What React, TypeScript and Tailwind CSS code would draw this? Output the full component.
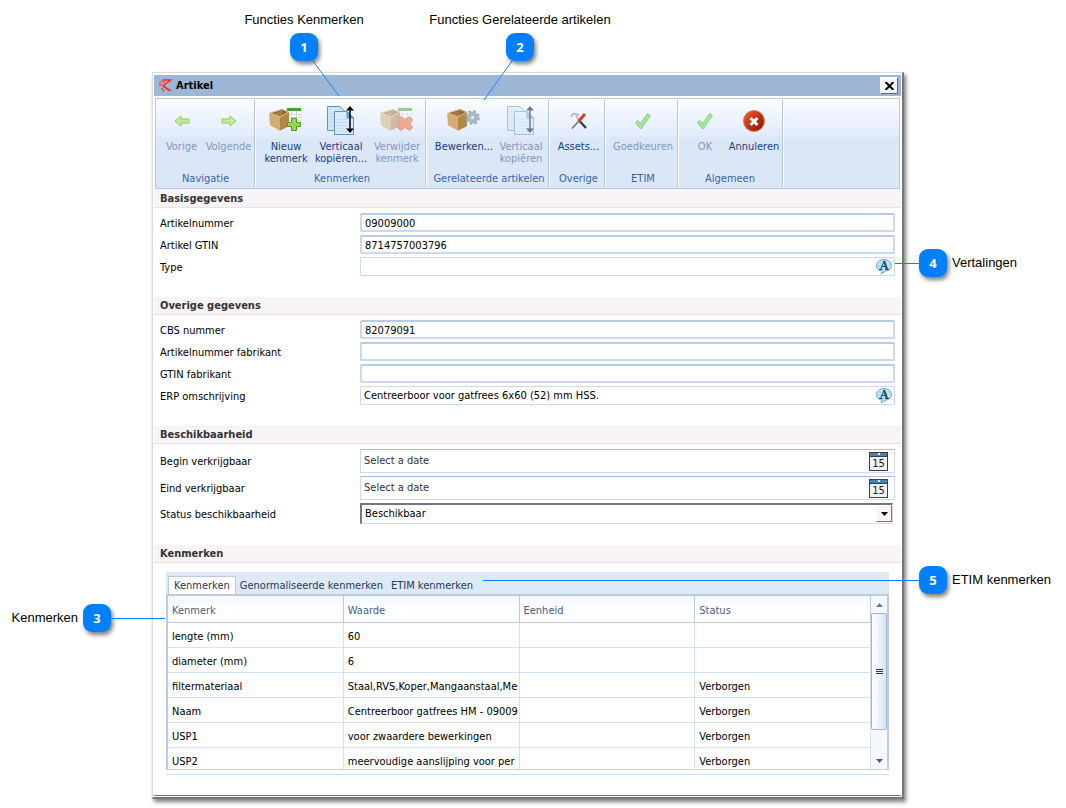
import { useState, type ReactNode } from 'react';
import clsx from 'clsx';

function ArrowIcon({ flip }: { flip?: boolean }) {
  return (
    <svg width="16" height="12" viewBox="0 0 16 12" className={clsx(flip && 'rotate-180')}>
      <path d="M1 6 L7 1 V4 H15 V8 H7 V11 Z" fill="#c9eb97" stroke="#92c95f" />
    </svg>
  );
}

function BoxShape() {
  return (
    <>
      <path d="M0.500 8 L13 4 L20 7 V21 L11 25.500 L1 20 Z" fill="#c39a61" />
      <path d="M1 8 L13 4 L20 7 L11 12 Z" fill="#8f6734" />
      <path d="M5 9 L13 5.500 V10.500 L11 12 Z" fill="#a97c44" />
      <path d="M0.500 8 L11 12 V25.500 L1 20 Z" fill="#d3ac74" />
      <path d="M11 12 L20 7 V21 L11 25.500 Z" fill="#b38747" />
      <path d="M1 8 L13 4.500 L19.500 7 L11 12 Z" fill="none" stroke="#e0c08c" />
    </>
  );
}

function SheetShape() {
  return (
    <>
      <rect x="18" y="3" width="14" height="17" fill="#fff" stroke="#c5d3c5" strokeWidth="0.500" />
      <rect x="18" y="3" width="14" height="3" fill="#4b9b3f" />
      <path d="M18 9.500 H32 M18 12.500 H32 M18 15.500 H32 M22.500 6 V20 M27.500 6 V20" stroke="#cddccd" />
    </>
  );
}

function BoxAddIcon() {
  return (
    <svg width="34" height="32" viewBox="0 0 34 32">
      <SheetShape />
      <BoxShape />
      <path
        d="M22.500 13.500 H27.500 V17.500 H31.500 V21.500 H27.500 V25.500 H22.500 V21.500 H18.500 V17.500 H22.500 Z"
        fill="#9bd455"
        stroke="#4e9a2c"
      />
    </svg>
  );
}

function BoxRemoveIcon() {
  return (
    <svg width="34" height="32" viewBox="0 0 34 32" className="opacity-50">
      <SheetShape />
      <BoxShape />
      <path
        d="M20.500 11.500 L25 14.500 L29.500 11.500 L32.500 14.500 L30 18.500 L32.500 22.500 L29.500 25.500 L25 22.500 L20.500 25.500 L17.500 22.500 L20 18.500 L17.500 14.500 Z"
        fill="#f3622c"
        stroke="#d8431a"
      />
    </svg>
  );
}

function BoxGearIcon() {
  return (
    <svg width="34" height="32" viewBox="0 0 34 32">
      <BoxShape />
      <circle cx="25.500" cy="12.500" r="6" fill="none" stroke="#9babb9" strokeWidth="2.500" strokeDasharray="2.700 2.010" />
      <circle cx="25.500" cy="12.500" r="4" fill="#fff" stroke="#a9b7c3" strokeWidth="3.500" />
      <circle cx="25.500" cy="12.500" r="2" fill="#e8eef6" stroke="#8a9aa8" strokeWidth="0.700" />
    </svg>
  );
}

function CopyIcon({ faded }: { faded?: boolean }) {
  return (
    <svg width="30" height="32" viewBox="0 0 30 32" className={clsx(faded && 'opacity-50')}>
      <path d="M1.500 1.500 H14 L20.500 8 V25.500 H1.500 Z" fill="#cfe4f8" stroke="#5b93c9" />
      <path d="M4 8.500 H16 M4 11.500 H16 M4 14.500 H16 M4 17.500 H16 M4 20.500 H16" stroke="#b9d5f0" />
      <path d="M8.500 6.500 H21 L27.500 13 V29.500 H8.500 Z" fill="#d9ebfb" stroke="#5b93c9" />
      <path d="M21 6.500 L27.500 13 H21 Z" fill="#74ace0" stroke="#5b93c9" />
      <path d="M11 14.500 H21 M11 17.500 H22 M11 20.500 H22 M11 23.500 H22 M11 26.500 H22" stroke="#c0dbf4" />
      <path d="M24 4 V25" stroke="#000" strokeWidth="1.500" />
      <path d="M24 1 L28 5.500 H20 Z M24 28 L28 23.500 H20 Z" fill="#000" />
    </svg>
  );
}

function ToolsIcon() {
  return (
    <svg width="18" height="18" viewBox="0 0 18 18">
      <path d="M1.500 5 V3.500 L4 1.500 L8 2.500 L6.500 4.500 L10 9" fill="none" stroke="#b9bfc4" strokeWidth="2" />
      <path d="M10 9.500 L16 16" stroke="#3b3f44" strokeWidth="2.500" />
      <path d="M2 16.500 L8.500 9.500" stroke="#6b7075" strokeWidth="1.500" />
      <path d="M8.500 9.500 L15 2" stroke="#d93a25" strokeWidth="3" />
    </svg>
  );
}

function CheckIcon() {
  return (
    <svg width="18" height="18" viewBox="0 0 18 18">
      <path d="M1.500 10.500 L4 8.500 L6.500 11.500 L13.500 1.500 L16.500 3.500 L7.500 16.500 H6 Z" fill="#a9e2a0" stroke="#8fd288" />
    </svg>
  );
}

function CancelIcon() {
  return (
    <svg width="24" height="24" viewBox="0 0 24 24">
      <defs>
        <linearGradient id="cancel" x1="0" y1="0" x2="1" y2="1">
          <stop offset="0.200" stopColor="#ea4a20" />
          <stop offset="0.900" stopColor="#8f1400" />
        </linearGradient>
      </defs>
      <circle cx="12" cy="12" r="10.500" fill="url(#cancel)" stroke="#c88573" />
      <path d="M8.500 9 L15.500 16 M15.500 9 L8.500 16" stroke="#fff" strokeWidth="3" />
    </svg>
  );
}

function TranslateIcon() {
  return (
    <svg width="16" height="16" viewBox="0 0 16 16">
      <path
        d="M8 0.500 C12 0.500 15.500 3 15.500 6.500 C15.500 9.500 13 11.500 10 12 L5 15 L6 12.200 C3 11.800 0.500 9.500 0.500 6.500 C0.500 3 4 0.500 8 0.500 Z"
        fill="#b5e2fb"
        stroke="#62aee0"
      />
      <path d="M4.500 10.500 L8 2.500" stroke="#3b4754" />
      <path d="M8 2 L11 10.500" stroke="#3b4754" strokeWidth="2.200" />
      <path d="M5.500 7.500 H10 M3 10.500 H6.500 M9 10.500 H13" stroke="#3b4754" />
    </svg>
  );
}

function CalendarIcon() {
  return (
    <span className="flex h-[19px] w-[19px] flex-col border border-[#3c4046] bg-[#f0f1f3]">
      <span className="flex h-1 items-center justify-center bg-[#3f86bd]">
        <span className="size-[2px] bg-white" />
      </span>
      <span className="border-t border-[#3c4046] text-center font-['DejaVu_Sans'] text-[10px] leading-[13px] text-[#222]">
        15
      </span>
    </span>
  );
}

function LogoIcon() {
  return (
    <svg width="15" height="15" viewBox="0 0 15 15" fill="none" stroke="#e8341c">
      <path d="M5 2 H12.500 L5 8" strokeWidth="1.500" />
      <path d="M4.500 7.500 L12.500 13" strokeWidth="1.800" />
      <path d="M3.500 10 L6 13.500" strokeWidth="1.200" />
      <path d="M1 5 L5 2.500 M1.500 7.500 L4 5.500 M5 4.500 L7 4" strokeWidth="1.200" strokeDasharray="2 1" />
    </svg>
  );
}

function RibbonGroup({ title, className, children }: { title: string; className: string; children: ReactNode }) {
  return (
    <div className={clsx('flex shrink-0 flex-col border-r border-[#b3c8e2] shadow-[1px_0_0_#fff]', className)}>
      <div className="flex flex-1 justify-center pt-[5px]">{children}</div>
      <div className="h-[17px] text-center leading-[17px] whitespace-nowrap text-[#3764ac]">{title}</div>
    </div>
  );
}

function RibbonButton({
  icon,
  label,
  className,
  disabled,
}: {
  icon: ReactNode;
  label: string;
  className: string;
  disabled?: boolean;
}) {
  return (
    <button
      type="button"
      disabled={disabled}
      className={clsx(
        'flex shrink-0 flex-col items-center leading-3 whitespace-pre',
        disabled ? 'text-[#8296c4]' : 'text-[#153e84]',
        className
      )}
    >
      <span className="mb-1 flex h-8 items-center justify-center">{icon}</span>
      {label}
    </button>
  );
}

function Section({ title, children }: { title: string; children: ReactNode }) {
  return (
    <section>
      <h2 className="h-[18px] border-b border-[#e5e3e6] bg-[#f7f3f7] pl-[6px] leading-[17px] font-bold text-[#333]">
        {title}
      </h2>
      {children}
    </section>
  );
}

function Fields({ children }: { children: ReactNode }) {
  return <div className="flex flex-col gap-[3px] px-[6px] pt-[5px] pb-[21px]">{children}</div>;
}

function Field({ id, label, children }: { id: string; label: string; children: ReactNode }) {
  return (
    <div className="grid grid-cols-[200px_1fr] items-center">
      <label htmlFor={id} className="pt-[2px]">
        {label}
      </label>
      {children}
    </div>
  );
}

function TextField({ id, label, value = '' }: { id: string; label: string; value?: string }) {
  return (
    <Field id={id} label={label}>
      <input
        id={id}
        type="text"
        defaultValue={value}
        className="h-[19px] w-full rounded-[2px] border-2 border-[#cbdaee] border-t-[#b9cce5] bg-white px-[3px] pt-px outline-none"
      />
    </Field>
  );
}

function TranslatedField({ id, label, value = '' }: { id: string; label: string; value?: string }) {
  return (
    <Field id={id} label={label}>
      <div className="flex h-[19px] items-center rounded-[1px] border border-[#cbdaee] pr-[2px] pl-[3px]">
        <input id={id} type="text" defaultValue={value} className="min-w-0 flex-1 outline-none" />
        <button type="button" aria-label="Vertalingen">
          <TranslateIcon />
        </button>
      </div>
    </Field>
  );
}

function DateField({ id, label }: { id: string; label: string }) {
  return (
    <Field id={id} label={label}>
      <div className="flex h-6 items-center border border-[#cbdaee] border-t-[#a9c0dd] pr-[6px] pl-[3px]">
        <input
          id={id}
          type="text"
          placeholder="Select a date"
          className="min-w-0 flex-1 outline-none placeholder:text-[#333]"
        />
        <button type="button" aria-label="Kies datum">
          <CalendarIcon />
        </button>
      </div>
    </Field>
  );
}

function Badge({ children }: { children: ReactNode }) {
  return (
    <span className="flex size-7 shrink-0 items-center justify-center rounded-[9px] bg-[#0080ff] font-['Open_Sans'] text-[13px] font-bold text-white shadow-[2px_3px_4px_rgba(0,0,0,0.5)]">
      {children}
    </span>
  );
}

const tabs = ['Kenmerken', 'Genormaliseerde kenmerken', 'ETIM kenmerken'];

const columns = ['Kenmerk', 'Waarde', 'Eenheid', 'Status'];

const rows = [
  ['lengte (mm)', '60', '', ''],
  ['diameter (mm)', '6', '', ''],
  ['filtermateriaal', 'Staal,RVS,Koper,Mangaanstaal,Messing', '', 'Verborgen'],
  ['Naam', 'Centreerboor gatfrees HM - 09009000', '', 'Verborgen'],
  ['USP1', 'voor zwaardere bewerkingen', '', 'Verborgen'],
  ['USP2', 'meervoudige aanslijping voor per extra', '', 'Verborgen'],
];

function FeatureTable() {
  const [activeTab, setActiveTab] = useState(tabs[0]);

  return (
    <div className="mx-3 mt-[9px] border-b border-[#d3e0ee] pb-1">
      <div role="tablist" className="flex h-[22px] items-end bg-[#dde9f5] pl-[2px] text-[#1f3864]">
        {tabs.map(tab => (
          <button
            key={tab}
            type="button"
            role="tab"
            aria-selected={tab === activeTab}
            onClick={() => setActiveTab(tab)}
            className={clsx(
              'h-[18px] leading-[18px] whitespace-nowrap',
              tab === activeTab ? 'border-x border-t border-[#b9cbe3] bg-white px-[5px]' : 'px-1 pt-px'
            )}
          >
            {tab}
          </button>
        ))}
      </div>
      <div className="flex h-[176px] overflow-hidden border-2 border-b border-[#bccbe0] border-b-[#c3d3e6]">
        <div className="min-w-0 flex-1 overflow-hidden">
          <table className="w-full table-fixed border-separate border-spacing-0">
            <thead>
              <tr>
                {columns.map(column => (
                  <th
                    key={column}
                    className="h-[27px] border-r border-b border-[#bccbe0] bg-linear-to-b from-[#f3f7fe] to-white to-60% px-[4px] pt-[3px] pb-0 text-left font-normal text-[#4a607f]"
                  >
                    {column}
                  </th>
                ))}
              </tr>
            </thead>
            <tbody>
              {rows.map(row => (
                <tr key={row[0]}>
                  {row.map((cell, i) => (
                    <td key={i} className="h-[25px] border-r border-b border-[#d3e3f6] pt-[3px] pr-px pb-0 pl-[4px]">
                      <div className="overflow-hidden whitespace-nowrap">{cell}</div>
                    </td>
                  ))}
                </tr>
              ))}
            </tbody>
          </table>
        </div>
        <div className="flex w-4 shrink-0 flex-col items-center bg-[#f5f9fe]">
          <span className="flex h-[17px] items-center">
            <svg width="7" height="4" viewBox="0 0 7 4">
              <path d="M0 4 L3.500 0 L7 4 Z" fill="#5f7da6" />
            </svg>
          </span>
          <span className="flex h-[117px] w-4 items-center justify-center rounded-[2px] border border-[#a3b4cc] bg-linear-to-r from-white to-[#d6e4f4]">
            <svg width="7" height="5" viewBox="0 0 7 5">
              <path d="M0 0.500 H7 M0 2.500 H7 M0 4.500 H7" stroke="#1c3a5e" />
            </svg>
          </span>
          <span className="mt-auto flex h-[17px] items-center">
            <svg width="7" height="4" viewBox="0 0 7 4">
              <path d="M0 0 L3.500 4 L7 0 Z" fill="#3f5f8a" />
            </svg>
          </span>
        </div>
      </div>
    </div>
  );
}

function Callouts() {
  return (
    <div className="pointer-events-none font-['Liberation_Sans',sans-serif] text-[13px] leading-4">
      <svg width="400" height="40" viewBox="0 0 400 40" className="absolute -top-3 left-0">
        <path d="M160 0 L186 35 M359 0 L331 39" stroke="#1a8cff" fill="none" />
      </svg>
      <div className="absolute -top-[61px] left-[151px] flex w-0 flex-col items-center gap-[5px] whitespace-nowrap">
        Functies Kenmerken
        <Badge>1</Badge>
      </div>
      <div className="absolute -top-[61px] left-[367px] flex w-0 flex-col items-center gap-[5px] whitespace-nowrap">
        Functies Gerelateerde artikelen
        <Badge>2</Badge>
      </div>
      <div className="absolute top-[531px] right-full mr-[42px] flex items-center gap-[5px] whitespace-nowrap">
        Kenmerken
        <Badge>3</Badge>
        <span className="absolute top-[14px] left-full h-px w-[54px] bg-[#0080ff]" />
      </div>
      <div className="absolute top-[176px] left-full ml-[17px] flex items-center gap-[5px] whitespace-nowrap">
        <Badge>4</Badge>
        Vertalingen
        <span className="absolute top-[14px] right-full h-px w-6 bg-[#0080ff]" />
      </div>
      <span className="absolute top-[507px] -right-[17px] left-[330px] h-px bg-[#0080ff]" />
      <div className="absolute top-[493px] left-full ml-[17px] flex items-center gap-[5px] whitespace-nowrap">
        <Badge>5</Badge>
        ETIM kenmerken
      </div>
    </div>
  );
}

export default function App() {
  return (
    <main className="overflow-hidden bg-white pt-[72px] pr-[162px] pb-[9px] pl-[152px] text-black">
      <div
        role="dialog"
        aria-labelledby="dialog-title"
        className="relative border-t border-r-2 border-b-2 border-l border-t-[#dedade] border-r-[#77747a] border-b-[#77747a] border-l-[#dedade] bg-white pt-[2px] pr-px pb-px pl-px font-['DejaVu_Sans_Condensed','Noto_Sans',sans-serif] text-[11px] leading-[14px] shadow-[2px_3px_4px_rgba(0,0,0,0.5)]"
      >
        <div className="border-b border-[#77747a] pb-[20px]">
          <header className="flex h-[21px] items-center gap-[3px] bg-[#9db6d6] pr-[3px] pl-1">
            <LogoIcon />
            <h1 id="dialog-title" className="flex-1 font-bold">
              Artikel
            </h1>
            <button
              type="button"
              aria-label="Sluiten"
              className="flex h-[17px] w-[18px] items-center justify-center border border-t-white border-r-[#6b686b] border-b-[#6b686b] border-l-white bg-[#f7f3f7]"
            >
              <svg width="9" height="8" viewBox="0 0 9 8">
                <path d="M0.500 0 L8.500 8 M8.500 0 L0.500 8" stroke="#000" strokeWidth="2" />
              </svg>
            </button>
          </header>

          <div className="bg-[#f7f3f7] pb-px">
            <div className="bg-white px-px pt-[2px]">
              <div className="flex h-[91px] border border-[#b4cbe6] bg-linear-to-b from-[#fafcff] via-[#e3ecfd] via-40% to-[#dbe7f6] to-45% p-px">
                <RibbonGroup title="Navigatie" className="w-[98px]">
                  <RibbonButton disabled label="Vorige" className="w-[46px]" icon={<ArrowIcon />} />
                  <RibbonButton disabled label="Volgende" className="w-12" icon={<ArrowIcon flip />} />
                </RibbonGroup>
                <RibbonGroup title="Kenmerken" className="w-[171px] pl-1">
                  <RibbonButton label={'Nieuw\nkenmerk'} className="w-[54px]" icon={<BoxAddIcon />} />
                  <RibbonButton label={'Verticaal\nkopiëren...'} className="w-14" icon={<CopyIcon />} />
                  <RibbonButton disabled label={'Verwijder\nkenmerk'} className="w-14" icon={<BoxRemoveIcon />} />
                </RibbonGroup>
                <RibbonGroup title="Gerelateerde artikelen" className="w-[123px] pl-1">
                  <RibbonButton label="Bewerken..." className="w-16" icon={<BoxGearIcon />} />
                  <RibbonButton disabled label={'Verticaal\nkopiëren'} className="w-[50px]" icon={<CopyIcon faded />} />
                </RibbonGroup>
                <RibbonGroup title="Overige" className="w-14 pl-1">
                  <RibbonButton label="Assets..." className="w-[50px]" icon={<ToolsIcon />} />
                </RibbonGroup>
                <RibbonGroup title="ETIM" className="w-[73px] pl-1">
                  <RibbonButton disabled label="Goedkeuren" className="w-[66px]" icon={<CheckIcon />} />
                </RibbonGroup>
                <RibbonGroup title="Algemeen" className="w-[105px]">
                  <RibbonButton disabled label="OK" className="w-12" icon={<CheckIcon />} />
                  <RibbonButton label="Annuleren" className="w-[50px]" icon={<CancelIcon />} />
                </RibbonGroup>
              </div>
            </div>
          </div>

          <Section title="Basisgegevens">
            <Fields>
              <TextField id="artikelnummer" label="Artikelnummer" value="09009000" />
              <TextField id="gtin" label="Artikel GTIN" value="8714757003796" />
              <TranslatedField id="type" label="Type" />
            </Fields>
          </Section>

          <Section title="Overige gegevens">
            <Fields>
              <TextField id="cbs" label="CBS nummer" value="82079091" />
              <TextField id="artikelnummer-fabrikant" label="Artikelnummer fabrikant" />
              <TextField id="gtin-fabrikant" label="GTIN fabrikant" />
              <TranslatedField
                id="erp"
                label="ERP omschrijving"
                value="Centreerboor voor gatfrees 6x60 (52) mm HSS."
              />
            </Fields>
          </Section>

          <Section title="Beschikbaarheid">
            <Fields>
              <DateField id="begin" label="Begin verkrijgbaar" />
              <DateField id="eind" label="Eind verkrijgbaar" />
              <Field id="status" label="Status beschikbaarheid">
                <div className="relative mr-[2px]">
                  <select
                    id="status"
                    className="block h-[21px] w-full appearance-none border-t-2 border-r border-b border-l-2 border-t-[#77747a] border-r-[#dedade] border-b-[#dedade] border-l-[#77747a] bg-white pl-[3px] outline-none"
                  >
                    <option>Beschikbaar</option>
                  </select>
                  <span className="pointer-events-none absolute top-[2px] right-px flex h-[17px] w-4 items-center justify-center border border-t-white border-r-[#77747a] border-b-[#77747a] border-l-white bg-[#f7f3f7]">
                    <svg width="7" height="4" viewBox="0 0 7 4">
                      <path d="M0 0 H7 L3.500 4 Z" fill="#000" />
                    </svg>
                  </span>
                </div>
              </Field>
            </Fields>
          </Section>

          <Section title="Kenmerken">
            <FeatureTable />
          </Section>
        </div>
        <Callouts />
      </div>
    </main>
  );
}
